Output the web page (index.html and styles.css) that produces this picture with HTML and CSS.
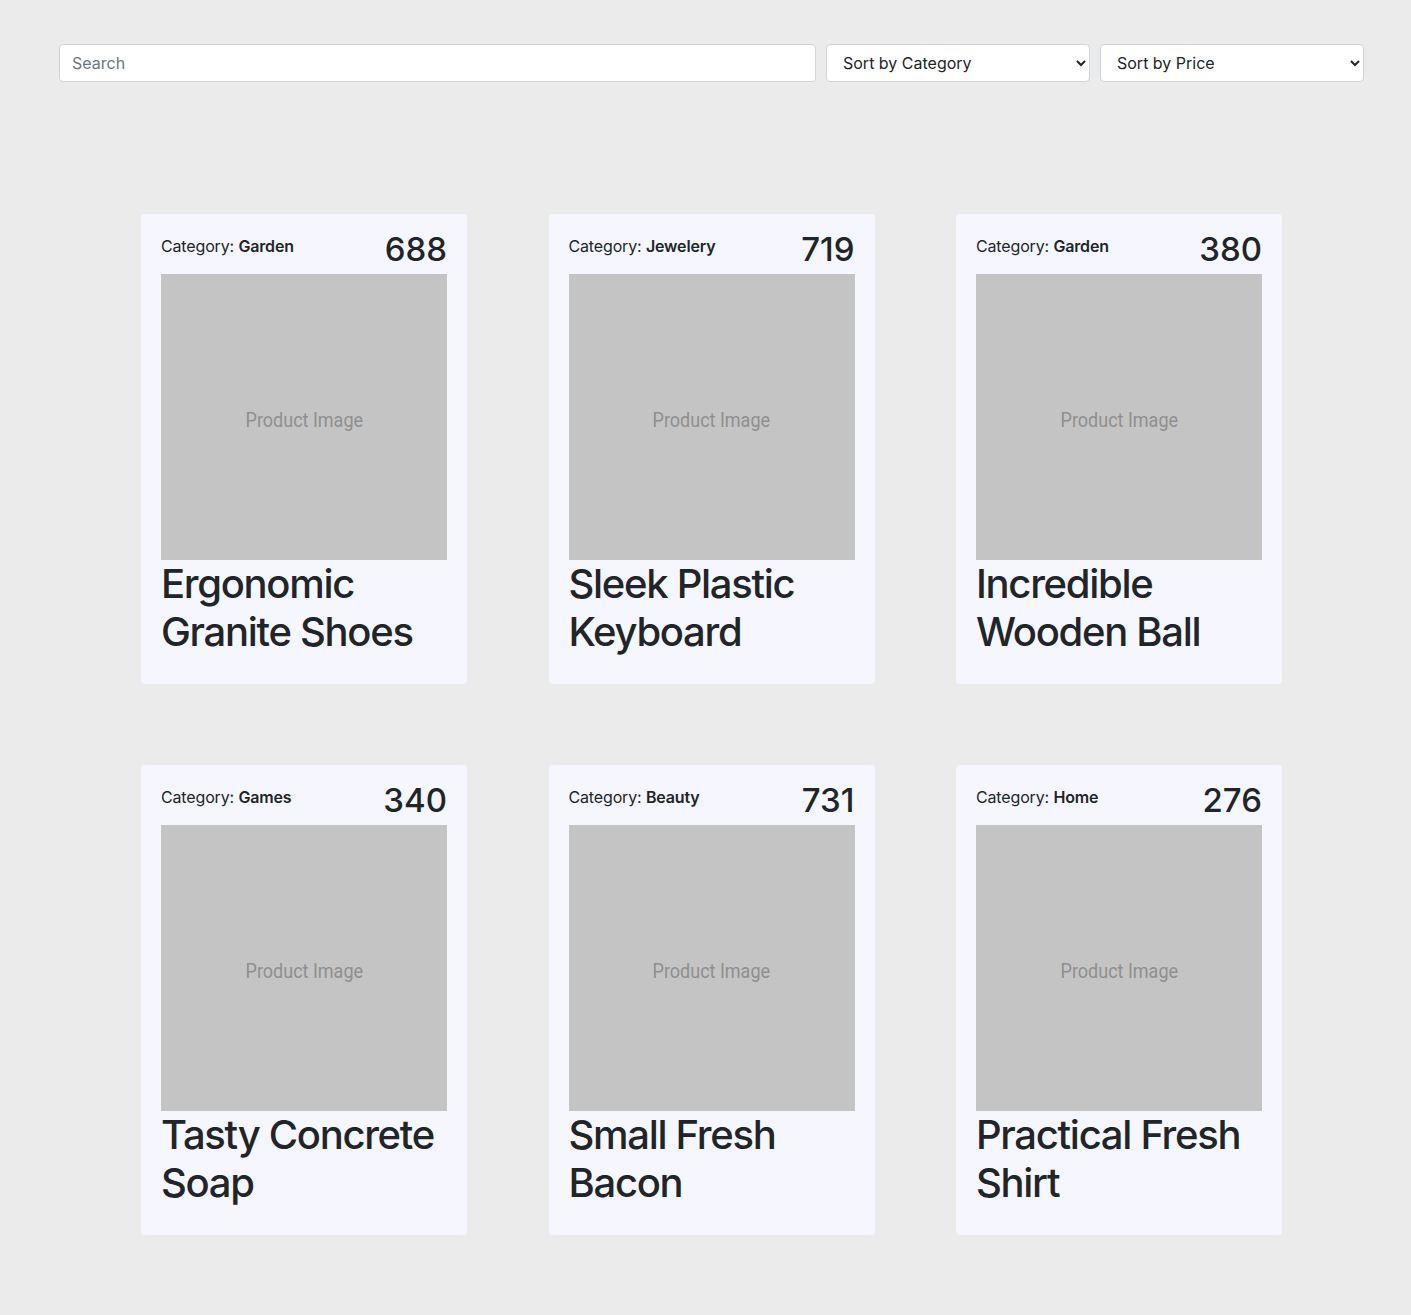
FILE: index.html
```html
<!DOCTYPE html>
<html lang="en">
<head>
    <meta charset="UTF-8">
    <meta name="viewport" content="width=device-width, initial-scale=1.0">
    <title>Products</title>
    <link rel="stylesheet" href="styles.css">
</head>
<body>

    <div class="toolbar">
        <input type="text" class="search" placeholder="Search">
        <select class="sort">
            <option>Sort by Category</option>
        </select>
        <select class="sort">
            <option>Sort by Price</option>
        </select>
    </div>

    <div class="product-grid">
        <div class="card">
            <div class="card-head">
                <div class="category">Category: <b>Garden</b></div>
                <div class="price">688</div>
            </div>
            <div class="image"><span>Product Image</span></div>
            <h2 class="title">Ergonomic Granite Shoes</h2>
        </div>
        <div class="card">
            <div class="card-head">
                <div class="category">Category: <b>Jewelery</b></div>
                <div class="price">719</div>
            </div>
            <div class="image"><span>Product Image</span></div>
            <h2 class="title">Sleek Plastic Keyboard</h2>
        </div>
        <div class="card">
            <div class="card-head">
                <div class="category">Category: <b>Garden</b></div>
                <div class="price">380</div>
            </div>
            <div class="image"><span>Product Image</span></div>
            <h2 class="title">Incredible Wooden Ball</h2>
        </div>
        <div class="card">
            <div class="card-head">
                <div class="category">Category: <b>Games</b></div>
                <div class="price">340</div>
            </div>
            <div class="image"><span>Product Image</span></div>
            <h2 class="title">Tasty Concrete Soap</h2>
        </div>
        <div class="card">
            <div class="card-head">
                <div class="category">Category: <b>Beauty</b></div>
                <div class="price">731</div>
            </div>
            <div class="image"><span>Product Image</span></div>
            <h2 class="title">Small Fresh Bacon</h2>
        </div>
        <div class="card">
            <div class="card-head">
                <div class="category">Category: <b>Home</b></div>
                <div class="price">276</div>
            </div>
            <div class="image"><span>Product Image</span></div>
            <h2 class="title">Practical Fresh Shirt</h2>
        </div>
    </div>

</body>
</html>
```

FILE: styles.css
```css
/* Base */
body {
    margin: 0;
    padding: 44px 0 80px;
    background-color: #ebebeb;
    font-family: Inter, "Noto Sans", sans-serif;
    color: #212529;
}

/* Filters */
.toolbar {
    display: flex;
    gap: 10px;
    margin-left: 59px;
    width: 1305px;
}
.search,
.sort {
    box-sizing: border-box;
    height: 38px;
    border: 1px solid #ced4da;
    border-radius: 4px;
    background-color: #fff;
    font-family: Inter, "Noto Sans", sans-serif;
    font-size: 16px;
    color: #212529;
}
.search {
    flex: 1;
    padding: 0 12px;
}
.search::placeholder {
    color: #6c757d;
}
.sort {
    width: 264px;
    padding: 0 8px 0 12px;
}

/* Cards */
.product-grid {
    display: grid;
    grid-template-columns: repeat(3, 326px);
    column-gap: 81.5px;
    row-gap: 81px;
    margin: 132px 0 0 141px;
}
.card {
    padding: 20px;
    border-radius: 4px;
    background-color: #f6f7fe;
}
.card-head {
    display: flex;
    justify-content: space-between;
    align-items: flex-start;
    height: 40px;
}
.category {
    font-size: 16px;
    line-height: 24px;
    letter-spacing: -0.15px;
}
.category b {
    font-weight: 600;
}
.price {
    font-size: 33px;
    line-height: 30px;
    font-weight: 500;
}
.image {
    display: flex;
    align-items: center;
    justify-content: center;
    box-sizing: border-box;
    height: 286px;
    padding-top: 6px;
    background-color: #c4c4c4;
    color: #8f8f8f;
    font-family: Roboto, sans-serif;
    font-size: 20px;
}
.image span {
    display: inline-block;
    transform: scaleX(0.9);
}
.title {
    margin: 0 0 8px;
    font-size: 40px;
    line-height: 48px;
    font-weight: 500;
    letter-spacing: -1.3px;
}
```
